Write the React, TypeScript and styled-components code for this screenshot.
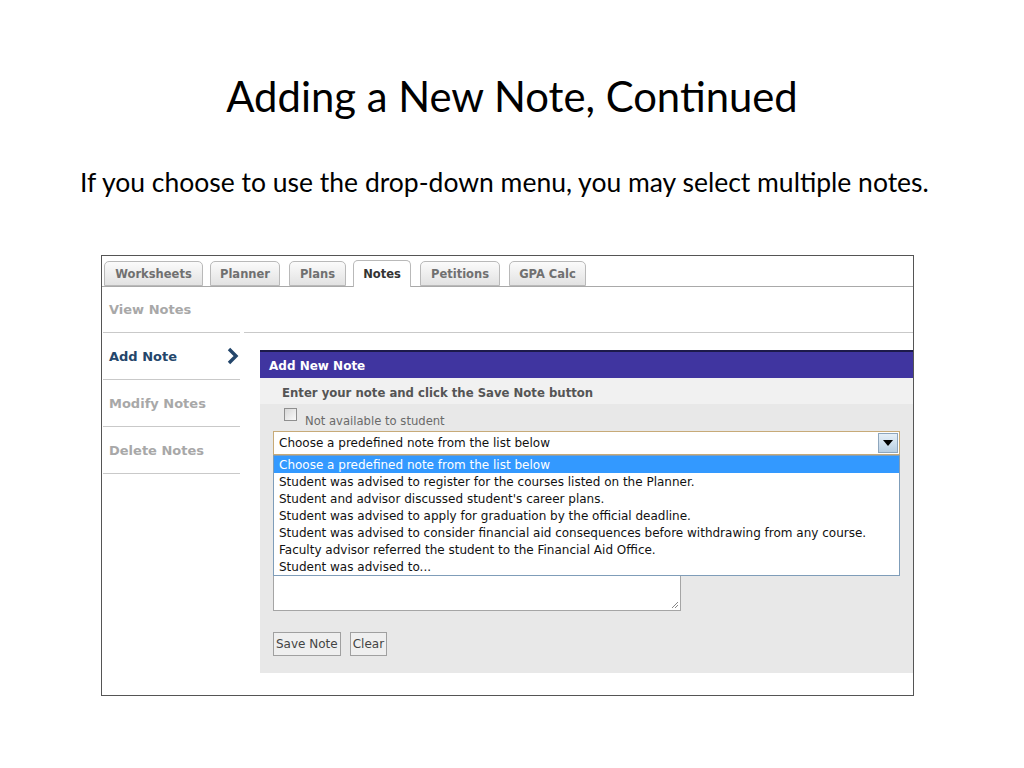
import React from "react";
import styled, { createGlobalStyle } from "styled-components";

const GlobalStyle = createGlobalStyle`
  html, body {
    margin: 0;
    padding: 0;
    background: #ffffff;
  }
`;

const Slide = styled.div`
  width: 1024px;
  height: 768px;
  display: flex;
  flex-direction: column;
  background: #ffffff;
  font-family: Lato, "Open Sans", sans-serif;
  color: #000000;
`;

const Title = styled.h1`
  margin: 72px 0 0;
  font-size: 41.8px;
  font-weight: 400;
  line-height: 48px;
  text-align: center;
`;

const Subtitle = styled.p`
  margin: 47px 0 0 80px;
  font-size: 26.5px;
  line-height: 30px;
`;

const Frame = styled.div`
  margin: 58px 0 0 101px;
  width: 811px;
  height: 439px;
  border: 1px solid #555555;
  display: flex;
  flex-direction: column;
  font-family: "DejaVu Sans", Verdana, sans-serif;
`;

const TabBar = styled.div`
  display: flex;
  align-items: flex-end;
  height: 30px;
  padding-left: 2px;
  border-bottom: 1px solid #a9a9a9;
`;

const Tab = styled.div<{ $active?: boolean; $w: number; $gap: number }>`
  width: ${(p) => p.$w}px;
  margin-left: ${(p) => p.$gap}px;
  height: ${(p) => (p.$active ? 27 : 25)}px;
  margin-bottom: ${(p) => (p.$active ? -1 : 0)}px;
  box-sizing: border-box;
  display: flex;
  align-items: center;
  justify-content: center;
  border: 1px solid #b9b9b9;
  border-bottom: ${(p) => (p.$active ? "none" : "1px solid #b9b9b9")};
  border-radius: 5px 5px 0 0;
  background: ${(p) =>
    p.$active ? "#ffffff" : "linear-gradient(#fbfbfb, #e2e2e2)"};
  color: ${(p) => (p.$active ? "#333333" : "#707070")};
  font-size: 11.5px;
  font-weight: 700;
`;

const Body = styled.div`
  flex: 1;
  display: flex;
`;

const Sidebar = styled.div`
  width: 138px;
  padding-left: 1px;
  display: flex;
  flex-direction: column;
`;

const SideItem = styled.div<{ $active?: boolean }>`
  height: 46px;
  box-sizing: border-box;
  display: flex;
  align-items: center;
  justify-content: space-between;
  padding: 0 0 0 6px;
  border-bottom: 1px solid #c9c9c9;
  color: ${(p) => (p.$active ? "#24466b" : "#a8a8a8")};
  font-size: 13px;
  font-weight: 700;
  & + & {
    height: 47px;
  }
`;

const Content = styled.div`
  flex: 1;
  margin-left: 4px;
  display: flex;
  flex-direction: column;
`;

const ContentTop = styled.div`
  height: 46px;
  box-sizing: border-box;
  border-bottom: 1px solid #c9c9c9;
`;

const Panel = styled.div`
  margin: 17px 0 0 16px;
  height: 323px;
  background: #e8e8e8;
  display: flex;
  flex-direction: column;
`;

const PanelHeader = styled.div`
  height: 28px;
  box-sizing: border-box;
  border-top: 2px solid #1d1a4a;
  background: #4035a0;
  color: #ffffff;
  font-size: 12px;
  font-weight: 700;
  display: flex;
  align-items: center;
  padding: 2px 0 0 9px;
`;

const Instruction = styled.div`
  height: 26px;
  box-sizing: border-box;
  padding: 3px 0 0 22px;
  background: #f1f1f1;
  color: #555555;
  font-size: 11.7px;
  font-weight: 700;
  display: flex;
  align-items: center;
`;

const Form = styled.div`
  padding: 4px 13px 0 13px;
  display: flex;
  flex-direction: column;
`;

const CheckRow = styled.label`
  display: flex;
  align-items: flex-end;
  gap: 8px;
  padding-left: 11px;
  height: 20px;
  color: #6a6a6a;
  font-size: 11.6px;
`;

const CheckBox = styled.span`
  width: 11px;
  height: 11px;
  margin-bottom: 7px;
  flex-shrink: 0;
  border: 1px solid #8f8f8f;
  background: linear-gradient(135deg, #d8d8d8, #fafafa);
`;

const SelectWrap = styled.div`
  position: relative;
  margin-top: 3px;
  width: 627px;
`;

const Select = styled.div`
  height: 24px;
  box-sizing: border-box;
  border: 1px solid #c7aa78;
  background: #ffffff;
  display: flex;
  align-items: center;
  justify-content: space-between;
  padding: 0 1px 0 5px;
  color: #111111;
  font-size: 12px;
`;

const Arrow = styled.span`
  width: 20px;
  height: 20px;
  box-sizing: border-box;
  border: 1px solid #8ea6bd;
  background: linear-gradient(#e6f0f8, #b9cfe3);
  display: flex;
  align-items: center;
  justify-content: center;
`;

const List = styled.div`
  position: absolute;
  top: 24px;
  left: 0;
  width: 627px;
  box-sizing: border-box;
  border: 1px solid #7f9db9;
  background: #ffffff;
  z-index: 2;
`;

const Option = styled.div<{ $selected?: boolean }>`
  height: 17px;
  line-height: 18px;
  padding-left: 5px;
  font-size: 12px;
  white-space: nowrap;
  background: ${(p) => (p.$selected ? "#3399ff" : "#ffffff")};
  color: ${(p) => (p.$selected ? "#ffffff" : "#111111")};
`;

const TextArea = styled.div`
  position: relative;
  width: 408px;
  height: 156px;
  box-sizing: border-box;
  border: 1px solid #a5a5a5;
  background: #ffffff;
`;

const Grip = styled.svg`
  position: absolute;
  right: 1px;
  bottom: 1px;
`;

const Buttons = styled.div`
  display: flex;
  gap: 9px;
  margin-top: 21px;
`;

const Button = styled.div`
  height: 24px;
  box-sizing: border-box;
  border: 1px solid #a0a0a0;
  background: #efefef;
  color: #444444;
  font-size: 12px;
  padding: 0 2px;
  display: flex;
  align-items: center;
`;

const tabs = [
  { label: "Worksheets", w: 99, gap: 0 },
  { label: "Planner", w: 70, gap: 7 },
  { label: "Plans", w: 57, gap: 9 },
  { label: "Notes", w: 58, gap: 7, active: true },
  { label: "Petitions", w: 80, gap: 9 },
  { label: "GPA Calc", w: 77, gap: 9 },
];

const options = [
  "Choose a predefined note from the list below",
  "Student was advised to register for the courses listed on the Planner.",
  "Student and advisor discussed student's career plans.",
  "Student was advised to apply for graduation by the official deadline.",
  "Student was advised to consider financial aid consequences before withdrawing from any course.",
  "Faculty advisor referred the student to the Financial Aid Office.",
  "Student was advised to...",
];

export default function App() {
  return (
    <>
      <GlobalStyle />
      <Slide>
        <Title>Adding a New Note, Continued</Title>
        <Subtitle>
          If you choose to use the drop-down menu, you may select multiple notes.
        </Subtitle>
        <Frame>
          <TabBar>
            {tabs.map((t) => (
              <Tab key={t.label} $w={t.w} $gap={t.gap} $active={t.active}>
                {t.label}
              </Tab>
            ))}
          </TabBar>
          <Body>
            <Sidebar>
              <SideItem>View Notes</SideItem>
              <SideItem $active>
                Add Note
                <svg width="14" height="18" viewBox="0 0 14 18">
                  <path
                    d="M3 2 L10 9 L3 16"
                    fill="none"
                    stroke="#24466b"
                    strokeWidth="3.4"
                  />
                </svg>
              </SideItem>
              <SideItem>Modify Notes</SideItem>
              <SideItem>Delete Notes</SideItem>
            </Sidebar>
            <Content>
              <ContentTop />
              <Panel>
                <PanelHeader>Add New Note</PanelHeader>
                <Instruction>
                  Enter your note and click the Save Note button
                </Instruction>
                <Form>
                  <CheckRow>
                    <CheckBox />
                    Not available to student
                  </CheckRow>
                  <SelectWrap>
                    <Select>
                      {options[0]}
                      <Arrow>
                        <svg width="10" height="6" viewBox="0 0 10 6">
                          <path d="M0 0 H10 L5 6 Z" fill="#000000" />
                        </svg>
                      </Arrow>
                    </Select>
                    <List>
                      {options.map((o, i) => (
                        <Option key={o} $selected={i === 0}>
                          {o}
                        </Option>
                      ))}
                    </List>
                    <TextArea>
                      <Grip width="9" height="9" viewBox="0 0 9 9">
                        <path
                          d="M8 2 L2 8 M8 5 L5 8"
                          stroke="#888888"
                          strokeWidth="1"
                        />
                      </Grip>
                    </TextArea>
                  </SelectWrap>
                  <Buttons>
                    <Button>Save Note</Button>
                    <Button>Clear</Button>
                  </Buttons>
                </Form>
              </Panel>
            </Content>
          </Body>
        </Frame>
      </Slide>
    </>
  );
}
